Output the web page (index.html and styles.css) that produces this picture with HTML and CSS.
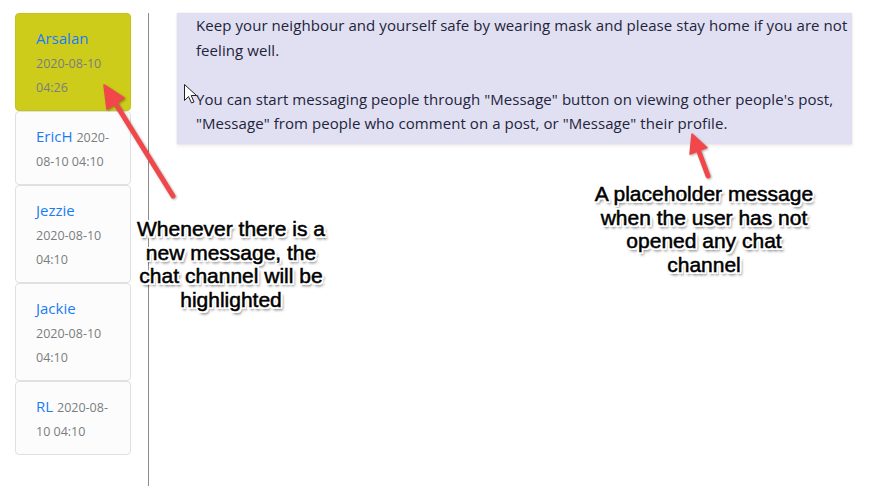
FILE: index.html
```html
<!DOCTYPE html>
<html lang="en">
<head>
<meta charset="utf-8">
<title>Chat</title>
<link rel="stylesheet" href="styles.css">
</head>
<body>
<div class="page">
  <aside class="channels">
    <div class="channel active"><a class="name">Arsalan</a> <small class="time">2020-08-10 04:26</small></div>
    <div class="channel"><a class="name">EricH</a> <small class="time">2020-08-10 04:10</small></div>
    <div class="channel"><a class="name">Jezzie</a> <small class="time">2020-08-10 04:10</small></div>
    <div class="channel"><a class="name">Jackie</a> <small class="time">2020-08-10 04:10</small></div>
    <div class="channel"><a class="name">RL</a> <small class="time">2020-08-10 04:10</small></div>
  </aside>
  <main class="chat">
    <div class="placeholder">
      <p>Keep your neighbour and yourself safe by wearing mask and please stay home if you are not feeling well.<br><br>You can start messaging people through "Message" button on viewing other people's post, "Message" from people who comment on a post, or "Message" their profile.</p>
    </div>
  </main>

  <svg class="overlay" width="882" height="486" viewBox="0 0 882 486" aria-hidden="true">
    <g class="arrow">
      <line x1="173" y1="196" x2="114" y2="101"/>
      <polygon points="104,85 124,98 107,109"/>
      <line x1="708" y1="176" x2="698" y2="149"/>
      <polygon points="692,134 706.8,147.6 690,154"/>
    </g>
    <path class="cursor" d="M184.5 84.5 L184.5 100.5 L188.5 96.5 L191.5 103 L194 102 L191.2 95.5 L196.5 95.5 Z"/>
  </svg>

  <div class="note note-left">Whenever there is a<br>new message, the<br>chat channel will be<br>highlighted</div>
  <div class="note note-right">A placeholder message<br>when the user has not<br>opened any chat<br>channel</div>
</div>
</body>
</html>
```
FILE: styles.css
```css
* { box-sizing: border-box; }
html, body { margin: 0; padding: 0; background: #fff; }
body { font-family: "Open Sans", "Noto Sans", sans-serif; color: #23243a; }

.page {
  position: relative;
  display: flex;
  align-items: stretch;
  min-height: 100vh;
  padding: 13px 30px 0 15px;
}

.channels {
  flex: none;
  width: 116px;
  margin-right: 17px;
}

.channel {
  padding: 12px 20px;
  font-size: 15px;
  line-height: 24px;
  background: #fcfcfc;
  border: 1px solid #e0e0e0;
  border-radius: 4px;
}
.channel.active {
  background: #cdcc1b;
  border-color: #c4c31a;
}
.name {
  color: #1a7cf5;
  line-height: 1;
  text-decoration: none;
}
.time {
  color: #7a7d80;
  font-size: 12.5px;
  line-height: 1;
}

.chat {
  flex: 1;
  border-left: 1px solid #8c8c8c;
  padding-left: 28px;
}

.placeholder {
  background: #e0e0f2;
  padding: 0 4px 8px 19px;
  box-shadow: 0 2px 3px rgba(120, 100, 100, 0.12), 0 0 1px rgba(230, 160, 160, 0.5);
}
.placeholder p {
  margin: 0;
  font-size: 15px;
  letter-spacing: 0.07px;
  line-height: 24.5px;
}

.overlay {
  position: absolute;
  left: 0;
  top: 0;
  pointer-events: none;
}
.arrow {
  filter: drop-shadow(1px 1px 1px rgba(0, 0, 0, 0.35));
}
.arrow line {
  stroke: #f2474a;
  stroke-width: 5;
  stroke-linecap: round;
}
.arrow polygon {
  fill: #f2474a;
  stroke: #f2474a;
  stroke-width: 1.5;
  stroke-linejoin: round;
}
.cursor {
  fill: #fff;
  stroke: #222;
  stroke-width: 1;
  stroke-linejoin: miter;
}

.note {
  position: absolute;
  font-family: "Liberation Sans", Arial, sans-serif;
  font-size: 21px;
  line-height: 23.5px;
  color: #000;
  text-align: center;
  white-space: nowrap;
  transform: translateX(-50%);
  -webkit-text-stroke: 0.5px #000;
  text-shadow:
    -2px -2px 0 #fff, 2px -2px 0 #fff, -2px 2px 0 #fff, 2px 2px 0 #fff,
    0 -2px 0 #fff, 0 2px 0 #fff, -2px 0 0 #fff, 2px 0 0 #fff,
    2px 3px 3px rgba(0, 0, 0, 0.75);
}
.note-left { left: 231px; top: 217px; }
.note-right { left: 704px; top: 182px; }
```
